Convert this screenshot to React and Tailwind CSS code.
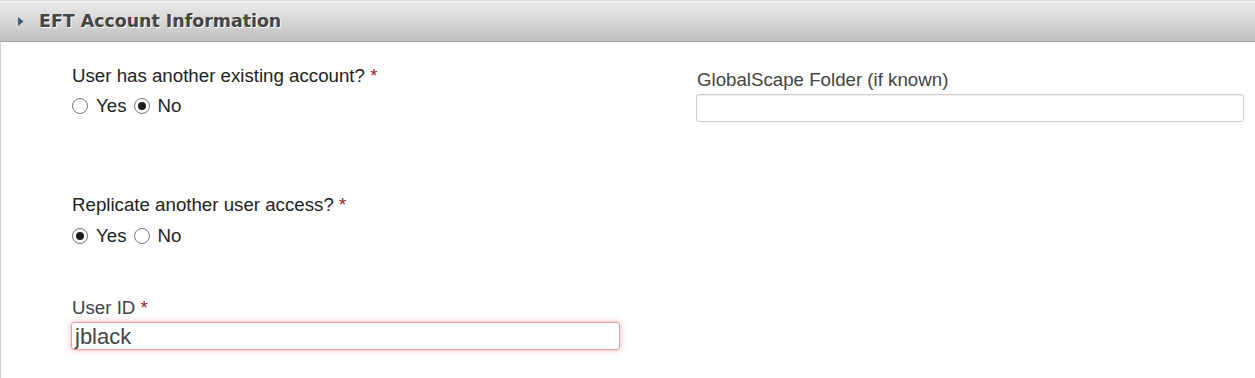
import React from "react";

function Radio({ checked }) {
  return (
    <span className="inline-flex h-[16px] w-[16px] shrink-0 items-center justify-center rounded-full border border-[#767676] bg-white">
      {checked && <span className="h-[8px] w-[8px] rounded-full bg-[#1e1e1e]" />}
    </span>
  );
}

function RadioGroup({ value }) {
  return (
    <div className="flex h-[20px] items-center text-[18.7px] leading-[20px] text-[#222]">
      <Radio checked={value === "yes"} />
      <span className="ml-[8px]">Yes</span>
      <span className="ml-[7px]" />
      <Radio checked={value === "no"} />
      <span className="ml-[8px]">No</span>
    </div>
  );
}

export default function App() {
  return (
    <div className="w-[1255px] h-[378px] bg-white overflow-hidden" style={{ fontFamily: '"Liberation Sans", Arial, sans-serif' }}>
      <div className="flex h-[42px] items-center border-t border-t-[#d9d9d9] border-b border-b-[#a4a4a4] bg-gradient-to-b from-[#ececec] to-[#c0c0c0] shadow-[inset_0_1px_0_#f7f7f7]">
        <svg width="6" height="9" viewBox="0 0 6 9" className="ml-[18px]">
          <path d="M0 0 L5.5 4.5 L0 9 Z" fill="#3f5f7c" />
        </svg>
        <span
          className="ml-[15px] text-[17.4px] font-bold text-[#454545] [text-shadow:1px_1px_0_#ffffff]"
          style={{ fontFamily: '"DejaVu Sans", Verdana, sans-serif' }}
        >
          EFT Account Information
        </span>
      </div>
      <div className="flex h-[336px] border-l border-l-[#cfcfcf] pl-[70px] pt-[24px]">
        <div className="flex w-[549px] flex-col">
          <div className="pl-[1px] text-[18.7px] leading-[20px] text-[#222]">
            User has another existing account? <span className="text-[#a0202a]">*</span>
          </div>
          <div className="mt-[10px] pl-[1px]">
            <RadioGroup value="no" />
          </div>
          <div className="mt-[79px] pl-[1px] text-[18.7px] leading-[20px] text-[#222]">
            Replicate another user access? <span className="text-[#a0202a]">*</span>
          </div>
          <div className="mt-[11px] pl-[1px]">
            <RadioGroup value="yes" />
          </div>
          <div className="mt-[52px] pl-[1px] text-[18.7px] leading-[20px] text-[#444]">
            User ID <span className="text-[#a0202a]">*</span>
          </div>
          <div className="mt-[4px] flex h-[28px] items-center rounded-[3px] border border-[#e0a0aa] bg-white pl-[3px] text-[22px] text-[#444] shadow-[0_0_6px_rgba(220,120,135,0.55)]">
            jblack
          </div>
        </div>
        <div className="ml-[76px] flex w-[548px] flex-col">
          <div className="mt-[4px] pl-[1px] text-[18.7px] leading-[20px] text-[#444]">
            GlobalScape Folder (if known)
          </div>
          <div className="mt-[4px] h-[28px] rounded-[3px] border border-[#cccccc] bg-white shadow-[inset_0_1px_1px_rgba(0,0,0,0.06)]" />
        </div>
      </div>
    </div>
  );
}
